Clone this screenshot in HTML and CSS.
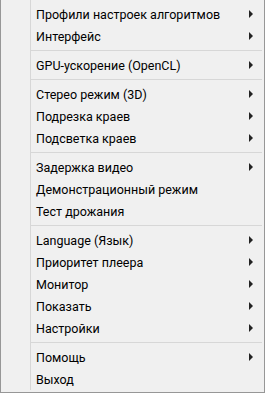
FILE: index.html
```html
<!DOCTYPE html>
<html lang="ru">
<head>
  <meta charset="UTF-8" />
  <meta name="viewport" content="width=device-width, initial-scale=1.0"/>
  <title>Меню</title>
  <link rel="stylesheet" href="styles.css">
</head>
<body>

  <ul class="menu">
    <li class="item sub">Профили настроек алгоритмов</li>
    <li class="item sub">Интерфейс</li>
    <li class="sep"></li>
    <li class="item sub">GPU-ускорение (OpenCL)</li>
    <li class="sep"></li>
    <li class="item sub">Стерео режим (3D)</li>
    <li class="item sub">Подрезка краев</li>
    <li class="item sub">Подсветка краев</li>
    <li class="sep"></li>
    <li class="item sub">Задержка видео</li>
    <li class="item">Демонстрационный режим</li>
    <li class="item">Тест дрожания</li>
    <li class="sep"></li>
    <li class="item sub">Language (Язык)</li>
    <li class="item sub">Приоритет плеера</li>
    <li class="item sub">Монитор</li>
    <li class="item sub">Показать</li>
    <li class="item sub">Настройки</li>
    <li class="sep"></li>
    <li class="item sub">Помощь</li>
    <li class="item">Выход</li>
  </ul>

</body>
</html>
```

FILE: styles.css
```css
* {
  margin: 0;
  padding: 0;
  box-sizing: border-box;
}

body {
  font-family: Roboto, 'Noto Sans', sans-serif;
  background: #f0f0f0;
  color: #000;
}

.menu {
  list-style: none;
  width: 265px;
  height: 393px;
  background: #f0f0f0;
  border: 1px solid #979797;
  border-top: none;
  padding: 3px 1px 2px 0;
  position: relative;
}

/* vertical gutter line behind the icon column */
.menu::before {
  content: "";
  position: absolute;
  top: 0;
  bottom: 2px;
  left: 29px;
  width: 1px;
  background: #d7d7d7;
}

.item {
  height: 22px;
  display: flex;
  align-items: center;
  padding-left: 35px;
  font-size: 12.5px;
  position: relative;
}

.item.sub::after {
  content: "";
  position: absolute;
  left: 248px;
  top: 7px;
  border-left: 4px solid #222;
  border-top: 4px solid transparent;
  border-bottom: 4px solid transparent;
}

.sep {
  height: 7px;
  margin-left: 30px;
  margin-right: 1px;
  display: flex;
  align-items: center;
}

.sep::before {
  content: "";
  display: block;
  width: 100%;
  height: 1px;
  background: #d7d7d7;
}
```
